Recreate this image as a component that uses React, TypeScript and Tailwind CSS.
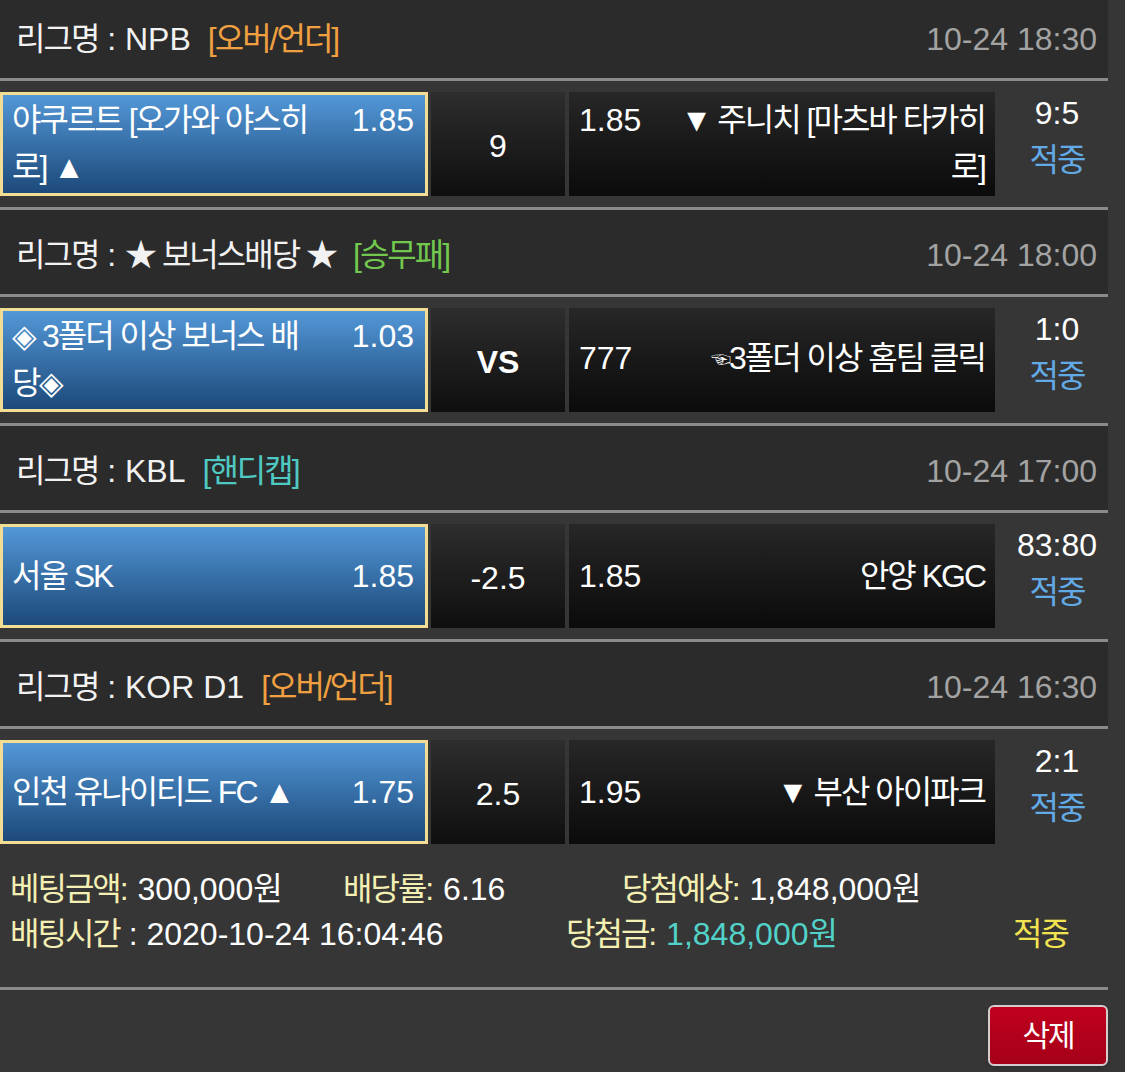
import React from 'react';

type Game = {
  league: string;
  tag: string;
  tagColor: string;
  time: string;
  home: React.ReactNode;
  homeOdds: string;
  mid: string;
  midBold?: boolean;
  awayOdds: string;
  away: React.ReactNode;
  score: string;
};

const games: Game[] = [
  {
    league: 'NPB',
    tag: '[오버/언더]',
    tagColor: 'text-[#f0a040]',
    time: '10-24 18:30',
    home: (<>야쿠르트 [오가와 야스히<br />로] ▲</>),
    homeOdds: '1.85',
    mid: '9',
    awayOdds: '1.85',
    away: (<>▼ 주니치 [마츠바 타카히<br />로]</>),
    score: '9:5',
  },
  {
    league: '★ 보너스배당 ★',
    tag: '[승무패]',
    tagColor: 'text-[#72c84e]',
    time: '10-24 18:00',
    home: (<>◈ 3폴더 이상 보너스 배<br />당◈</>),
    homeOdds: '1.03',
    mid: 'VS',
    midBold: true,
    awayOdds: '777',
    away: (<><span className="text-[20px] align-middle">☜</span>3폴더 이상 홈팀 클릭</>),
    score: '1:0',
  },
  {
    league: 'KBL',
    tag: '[핸디캡]',
    tagColor: 'text-[#4fcac2]',
    time: '10-24 17:00',
    home: '서울 SK',
    homeOdds: '1.85',
    mid: '-2.5',
    awayOdds: '1.85',
    away: '안양 KGC',
    score: '83:80',
  },
  {
    league: 'KOR D1',
    tag: '[오버/언더]',
    tagColor: 'text-[#f0a040]',
    time: '10-24 16:30',
    home: '인천 유나이티드 FC ▲',
    homeOdds: '1.75',
    mid: '2.5',
    awayOdds: '1.95',
    away: '▼ 부산 아이파크',
    score: '2:1',
  },
];

function Line() {
  return <div className="w-[1108px] h-[3px] bg-[#8a8a8a]" />;
}

function GameBlock({ g, last }: { g: Game; last: boolean }) {
  return (
    <div>
      {/* 리그 헤더 */}
      <div className="w-[1108px] h-[84px] bg-[#2b2b2b] flex items-center justify-between pl-[16px] pr-[11px] pt-[6px]">
        <div className="flex items-center">
          <span className="text-[#f2f2f2]">
            <span className="tracking-[-2px]">리그명</span> : <span className={g.league.startsWith('★') ? 'tracking-[-2px]' : ''}>{g.league}</span>
          </span>
          <span className={`ml-[17px] tracking-[-2px] ${g.tagColor}`}>{g.tag}</span>
        </div>
        <span className="text-[#a3a3a3]">{g.time}</span>
      </div>
      <Line />

      {/* 경기 row */}
      <div className="h-[126px] flex py-[11px]">
        <div className="w-[428px] shrink-0 border-[3px] border-[#f3dc94] bg-gradient-to-b from-[#5398d8] to-[#1d4a7a] flex items-center pl-[9px] pr-[11px] text-white">
          <div className="flex items-start w-full leading-[47px]">
            <span className="flex-1 tracking-[-2px] whitespace-nowrap">{g.home}</span>
            <span className="ml-2">{g.homeOdds}</span>
          </div>
        </div>
        <div className="w-[134px] shrink-0 ml-[3px] bg-gradient-to-b from-[#2e2e2e] to-[#0f0f0f] flex items-center justify-center text-white pt-[4px]">
          <span className={g.midBold ? 'font-bold' : ''}>{g.mid}</span>
        </div>
        <div className="w-[426px] shrink-0 ml-[4px] bg-gradient-to-b from-[#272727] to-[#0b0b0b] flex items-center pl-[10px] pr-[10px] text-white">
          <div className="flex items-start w-full leading-[47px]">
            <span>{g.awayOdds}</span>
            <span className="flex-1 text-right tracking-[-2px] whitespace-nowrap">{g.away}</span>
          </div>
        </div>
        <div className="w-[124px] shrink-0 flex flex-col items-center justify-center leading-[47px] pb-[14px]">
          <span className="text-white">{g.score}</span>
          <span className="text-[#62aae6] tracking-[-2px]">적중</span>
        </div>
      </div>
      {!last && <Line />}
    </div>
  );
}

export default function App() {
  return (
    <div
      className="min-h-screen bg-[#363636] text-[32px] overflow-hidden"
      style={{ fontFamily: '"Liberation Sans", "Noto Sans CJK KR", sans-serif' }}
    >
      <div className="-mt-[6px]">
        {games.map((g, i) => (
          <GameBlock key={i} g={g} last={i === games.length - 1} />
        ))}
      </div>

      {/* 베팅 요약 */}
      <div className="h-[132px] pl-[10px] pt-[12px] leading-[45px]">
        <div className="flex">
          <span className="w-[333px] shrink-0">
            <span className="text-[#f4efb2] tracking-[-2px]">베팅금액</span><span className="text-[#f4efb2]">:</span>
            <span className="text-white"> 300,000<span className="tracking-[-2px]">원</span></span>
          </span>
          <span className="w-[279px] shrink-0">
            <span className="text-[#f4efb2] tracking-[-2px]">배당률</span><span className="text-[#f4efb2]">:</span>
            <span className="text-white"> 6.16</span>
          </span>
          <span>
            <span className="text-[#f4efb2] tracking-[-2px]">당첨예상</span><span className="text-[#f4efb2]">:</span>
            <span className="text-white"> 1,848,000<span className="tracking-[-2px]">원</span></span>
          </span>
        </div>
        <div className="flex">
          <span className="w-[556px] shrink-0">
            <span className="text-[#f4efb2] tracking-[-2px]">배팅시간</span>
            <span className="text-white"> : 2020-10-24 16:04:46</span>
          </span>
          <span className="w-[447px] shrink-0">
            <span className="text-[#f4efb2] tracking-[-2px]">당첨금</span><span className="text-[#f4efb2]">:</span>
            <span className="text-[#52d2c8]"> 1,848,000<span className="tracking-[-2px]">원</span></span>
          </span>
          <span className="text-[#f2e350] tracking-[-2px]">적중</span>
        </div>
      </div>
      <Line />

      <div className="w-[1108px] flex justify-end pt-[15px]">
        <button className="w-[120px] h-[61px] rounded-[6px] border-2 border-[#d6cccc] bg-gradient-to-b from-[#c0001e] to-[#a50018] text-white text-[30px] tracking-[-2px] shadow-md">
          삭제
        </button>
      </div>
    </div>
  );
}
